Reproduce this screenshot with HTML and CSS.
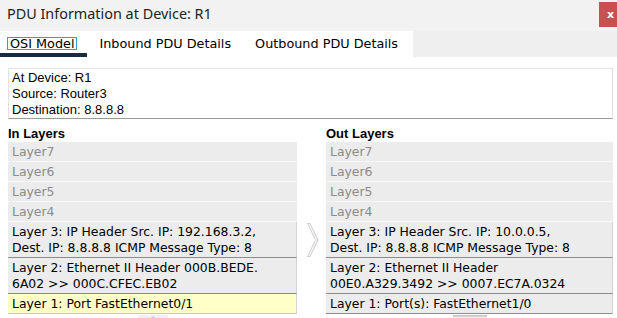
FILE: index.html
```html
<!DOCTYPE html>
<html lang="en">
<head>
    <meta charset="UTF-8">
    <title>PDU Information at Device: R1</title>
    <link rel="stylesheet" href="styles.css">
</head>
<body>

    <div class="title-bar">
        <span class="title">PDU Information at Device: R1</span>
        <button class="close-btn">x</button>
    </div>

    <div class="tab-bar">
        <div class="tabs">
            <div class="tab active"><span class="focus">OSI Model</span></div>
            <div class="tab">Inbound PDU Details</div>
            <div class="tab">Outbound PDU Details</div>
        </div>
    </div>

    <div class="content">
        <div class="info-box">
            <div>At Device: R1</div>
            <div>Source: Router3</div>
            <div>Destination: 8.8.8.8</div>
        </div>

        <div class="layers">
            <div class="column">
                <div class="column-title">In Layers</div>
                <div class="layer off">Layer7</div>
                <div class="layer off">Layer6</div>
                <div class="layer off">Layer5</div>
                <div class="layer off">Layer4</div>
                <div class="layer on">Layer 3: IP Header Src. IP: 192.168.3.2,<br>Dest. IP: 8.8.8.8 ICMP Message Type: 8</div>
                <div class="layer on">Layer 2: Ethernet II Header 000B.BEDE.<br>6A02 &gt;&gt; 000C.CFEC.EB02</div>
                <div class="layer on selected">Layer 1: Port FastEthernet0/1</div>
                <div class="flow-arrow">
                    <svg width="30" height="12" viewBox="0 0 30 12">
                        <rect x="0" y="0" width="30" height="12" fill="#f1f1f1"/>
                        <path d="M10 6 L15 2 L20 6" fill="none" stroke="#cfcfcf" stroke-width="1.5"/>
                    </svg>
                </div>
            </div>

            <div class="middle">
                <svg width="12" height="34" viewBox="0 0 12 34">
                    <polygon points="0.5,0.5 3,0.5 11,17 3,33.5 0.5,33.5 8.5,17" fill="#f6f6f6" stroke="#cdcdcd" stroke-width="1"/>
                </svg>
            </div>

            <div class="column">
                <div class="column-title">Out Layers</div>
                <div class="layer off">Layer7</div>
                <div class="layer off">Layer6</div>
                <div class="layer off">Layer5</div>
                <div class="layer off">Layer4</div>
                <div class="layer on">Layer 3: IP Header Src. IP: 10.0.0.5,<br>Dest. IP: 8.8.8.8 ICMP Message Type: 8</div>
                <div class="layer on">Layer 2: Ethernet II Header<br>00E0.A329.3492 &gt;&gt; 0007.EC7A.0324</div>
                <div class="layer on">Layer 1: Port(s): FastEthernet1/0</div>
                <div class="flow-arrow">
                    <svg width="34" height="12" viewBox="0 0 34 12">
                        <rect x="0" y="0" width="34" height="12" fill="#ececec"/>
                        <rect x="0" y="0" width="34" height="1.5" fill="#c4c4c4"/>
                    </svg>
                </div>
            </div>
        </div>
    </div>

</body>
</html>
```

FILE: styles.css
```css
body {
    margin: 0;
    background: #ffffff;
    height: 318px;
    overflow: hidden;
    font-family: "DejaVu Sans", Verdana, sans-serif;
    font-size: 12.4px;
    color: #000000;
}
.title-bar {
    display: flex;
    justify-content: space-between;
    height: 31px;
    background: #f2f2f2;
}
.title {
    padding: 4px 0 0 7px;
    font-family: "Noto Sans", "Segoe UI", sans-serif;
    font-size: 14.4px;
    line-height: 20px;
    color: #222222;
}
.close-btn {
    width: 18px;
    height: 25px;
    margin-top: 2px;
    padding: 0 0 0 8px;
    border: none;
    background: #c75050;
    color: #ffffff;
    font-family: "DejaVu Sans", sans-serif;
    font-size: 11px;
    font-weight: bold;
    text-align: left;
}
.tab-bar {
    height: 26px;
    background: #efefef;
}
.tabs {
    display: flex;
    width: 413px;
    height: 26px;
    background: #ffffff;
}
.tab {
    padding: 5px 12px 0;
    height: 21px;
    font-size: 12.8px;
    line-height: 16px;
    white-space: nowrap;
    color: #000000;
}
.tab.active {
    padding-left: 7px;
    padding-right: 10px;
    height: 17px;
    border-bottom: 4px solid #172a4a;
}
.focus {
    display: inline-block;
    padding: 0 2px;
    line-height: 11px;
    margin-top: 1px;
    border: 1px solid #2aa0d8;
}
.content {
    padding: 11px 4px 0 8px;
}
.info-box {
    padding: 1px 3px 0;
    border: 1px solid #e2e2e2;
    border-bottom-color: #9a9a9a;
    font-family: "Liberation Sans", Arial, sans-serif;
    font-size: 13px;
    line-height: 16px;
}
.layers {
    display: grid;
    grid-template-columns: 289px 29px 1fr;
    margin-top: 7px;
}
.column-title {
    font-family: "Liberation Sans", Arial, sans-serif;
    font-weight: bold;
    font-size: 13px;
    line-height: 16px;
}
.layer {
    padding: 2px 4px 1px;
    line-height: 16px;
    white-space: nowrap;
    background: #ececec;
    border-bottom: 1px solid #f7f7f7;
}
.layer.off {
    color: #8b8b8b;
}
.layer.on {
    border-bottom-color: #8c8c8c;
    border-right: 1px solid #d4d4d4;
}
.layer.selected {
    background: #ffffc8;
    border-bottom-color: #c8c8b4;
}
.middle {
    padding: 97px 0 0 10px;
}
.flow-arrow {
    display: flex;
    justify-content: center;
    margin-top: 1px;
}
```
